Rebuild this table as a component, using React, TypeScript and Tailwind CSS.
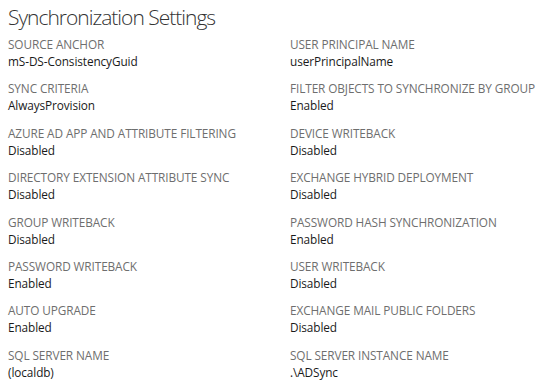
import React from 'react';

type Setting = { label: string; value: string };

const settings: Setting[] = [
  { label: 'SOURCE ANCHOR', value: 'mS-DS-ConsistencyGuid' },
  { label: 'USER PRINCIPAL NAME', value: 'userPrincipalName' },
  { label: 'SYNC CRITERIA', value: 'AlwaysProvision' },
  { label: 'FILTER OBJECTS TO SYNCHRONIZE BY GROUP', value: 'Enabled' },
  { label: 'AZURE AD APP AND ATTRIBUTE FILTERING', value: 'Disabled' },
  { label: 'DEVICE WRITEBACK', value: 'Disabled' },
  { label: 'DIRECTORY EXTENSION ATTRIBUTE SYNC', value: 'Disabled' },
  { label: 'EXCHANGE HYBRID DEPLOYMENT', value: 'Disabled' },
  { label: 'GROUP WRITEBACK', value: 'Disabled' },
  { label: 'PASSWORD HASH SYNCHRONIZATION', value: 'Enabled' },
  { label: 'PASSWORD WRITEBACK', value: 'Enabled' },
  { label: 'USER WRITEBACK', value: 'Disabled' },
  { label: 'AUTO UPGRADE', value: 'Enabled' },
  { label: 'EXCHANGE MAIL PUBLIC FOLDERS', value: 'Disabled' },
  { label: 'SQL SERVER NAME', value: '(localdb)' },
  { label: 'SQL SERVER INSTANCE NAME', value: '.\\ADSync' },
];

export default function App() {
  return (
    <div className="w-[540px] h-[388px] overflow-hidden bg-white pl-[8px] font-['Open_Sans',sans-serif]">
      <h1 className="h-[36px] pt-[3px] text-[21px] leading-[28px] font-light text-[#333] tracking-[-1px]">
        Synchronization Settings
      </h1>
      <div className="grid grid-cols-[282px_1fr]">
        {settings.map((s) => (
          <div key={s.label} className="h-[44.4px]">
            <div className="text-[11.8px] leading-[17px] text-[#6e6e6e] tracking-[-0.1px]">{s.label}</div>
            <div className="text-[11.8px] leading-[17px] text-[#1a1a1a] tracking-[-0.1px]">{s.value}</div>
          </div>
        ))}
      </div>
    </div>
  );
}
